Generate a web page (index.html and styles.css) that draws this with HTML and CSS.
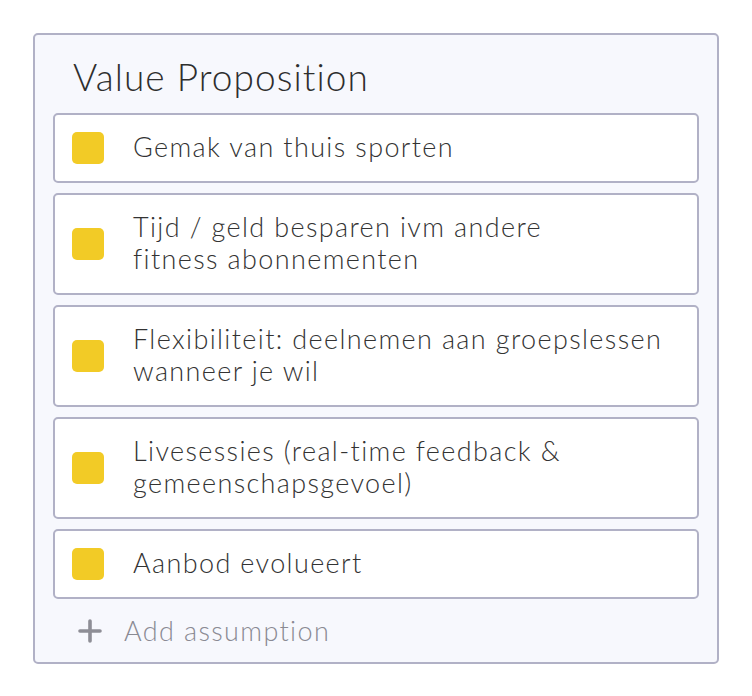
FILE: index.html
```html
<!DOCTYPE html>
<html>
    <head>
        <meta charset="utf-8">
        <link rel="stylesheet" href="styles.css">
        <title>Value Proposition</title>
    </head>
    <body>
        <section class="block">
            <h2 class="block-title">Value Proposition</h2>
            <ul class="assumptions">
                <li class="assumption"><span class="marker"></span><span class="assumption-text">Gemak van thuis sporten</span></li>
                <li class="assumption"><span class="marker"></span><span class="assumption-text">Tijd / geld besparen ivm andere<br>fitness abonnementen</span></li>
                <li class="assumption"><span class="marker"></span><span class="assumption-text">Flexibiliteit: deelnemen aan groepslessen wanneer je wil</span></li>
                <li class="assumption"><span class="marker"></span><span class="assumption-text">Livesessies (real-time feedback &amp; gemeenschapsgevoel)</span></li>
                <li class="assumption"><span class="marker"></span><span class="assumption-text">Aanbod evolueert</span></li>
            </ul>
            <button class="add-btn">
                <svg class="add-icon" width="24" height="24" viewBox="0 0 24 24"><path d="M12 2v20M2 12h20" stroke="#8e8e96" stroke-width="3.6" stroke-linecap="round" fill="none"/></svg>
                Add assumption
            </button>
        </section>
    </body>
</html>
```

FILE: styles.css
```css
body {
  margin: 0;
  padding: 33px 0 0 33px;
  font-family: Lato, "Open Sans", sans-serif;
  color: #333;
}

.block {
  width: 646px;
  background-color: #f7f8fd;
  border: 2px solid #b1b1c6;
  border-radius: 5px;
  padding: 0 18px 11px 18px;
}

.block-title {
  margin: 0;
  padding: 20px 0 14px 20px;
  font-size: 37px;
  line-height: 44px;
  font-weight: 300;
  letter-spacing: 1.05px;
  color: #2e2e2e;
}

.assumptions {
  list-style: none;
  margin: 0;
  padding: 0;
  display: flex;
  flex-direction: column;
  gap: 10px;
}

.assumption {
  display: flex;
  align-items: center;
  gap: 29px;
  background-color: #fff;
  border: 2px solid #b1b1c6;
  border-radius: 5px;
  padding: 17px;
  font-size: 27px;
  line-height: 32px;
  font-weight: 300;
  letter-spacing: 1.37px;
}

.assumption-text {
  position: relative;
  top: -1px;
}

.marker {
  flex: none;
  width: 32px;
  height: 32px;
  border-radius: 5px;
  background-color: #f2cb26;
}

.add-btn {
  display: flex;
  align-items: center;
  gap: 22px;
  margin: 12px 0 0 25px;
  padding: 4px 0;
  border: none;
  background: none;
  font-family: inherit;
  font-size: 27px;
  line-height: 32px;
  font-weight: 300;
  letter-spacing: 1.37px;
  color: #8a8a93;
}
```
